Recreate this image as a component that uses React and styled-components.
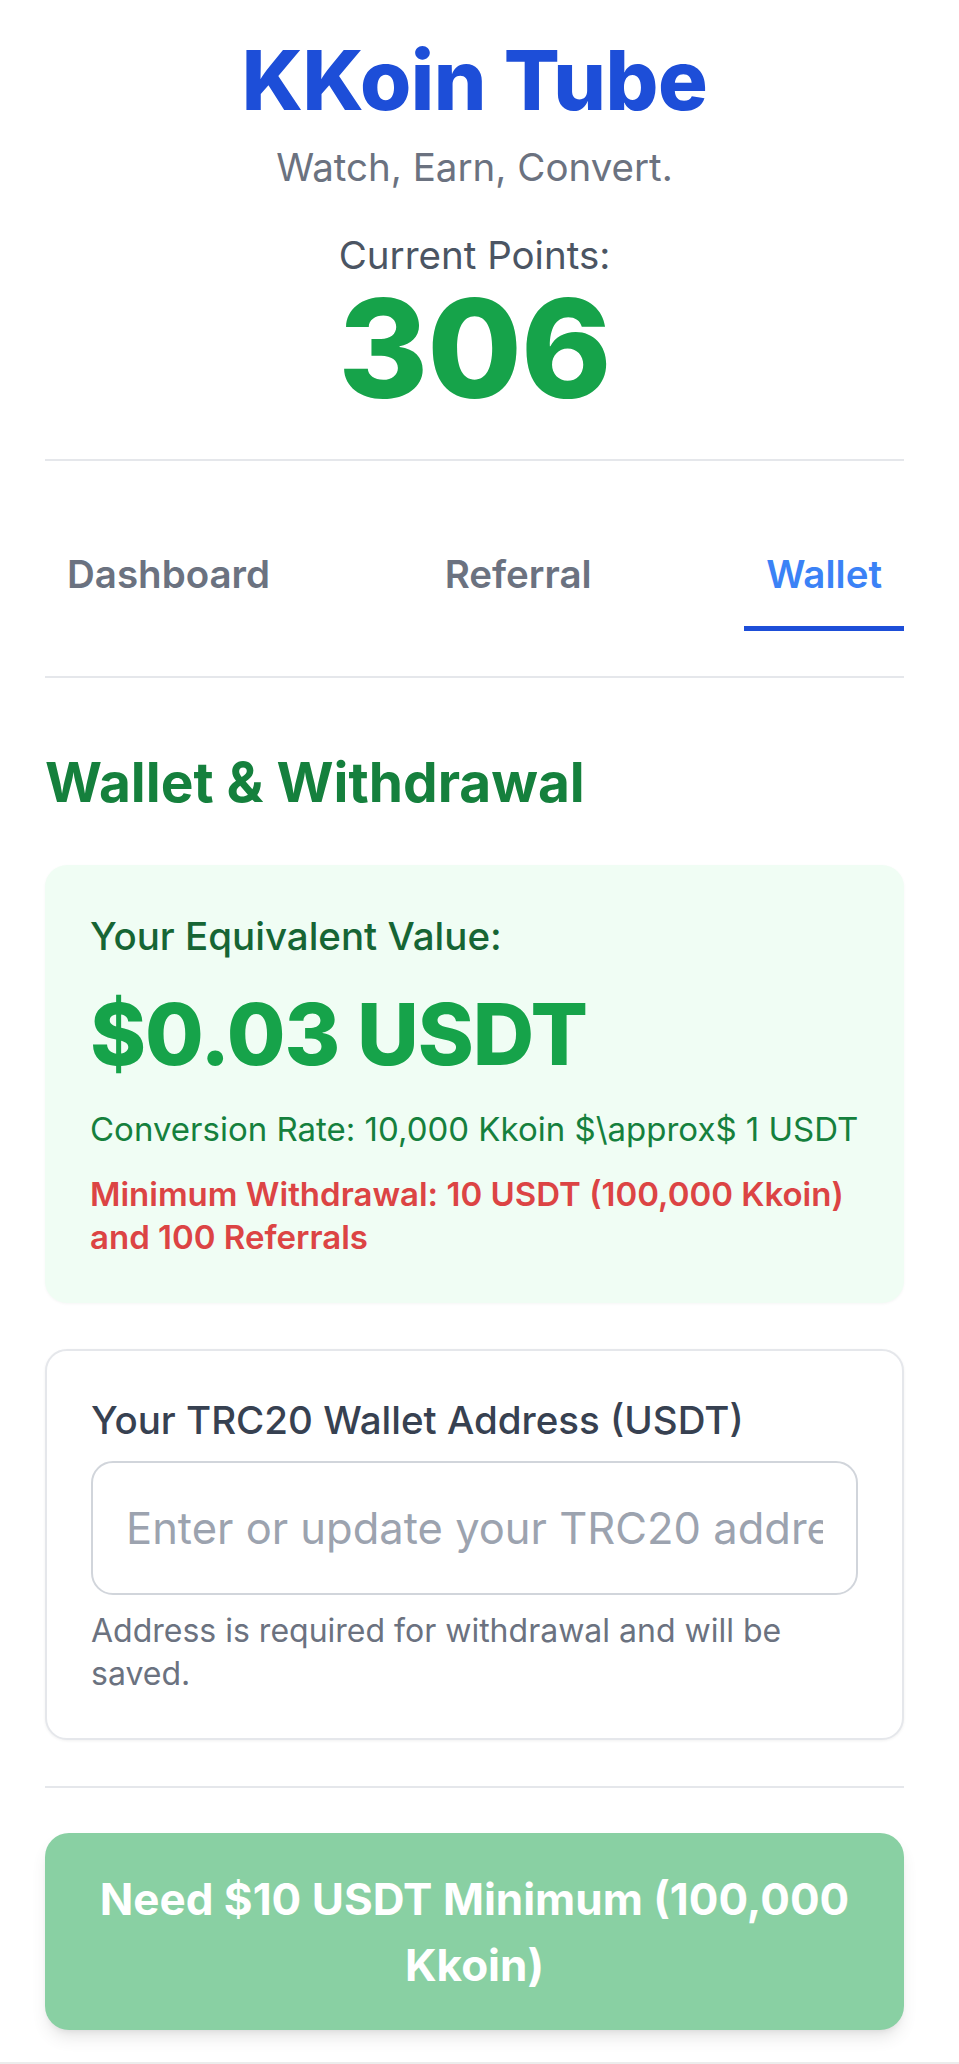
import React from "react";
import styled, { createGlobalStyle } from "styled-components";

const Global = createGlobalStyle`
  html, body { margin: 0; padding: 0; background: #ffffff; }
  body { font-family: Inter, "Noto Sans", "Liberation Sans", sans-serif; -webkit-font-smoothing: antialiased; }
  * { box-sizing: border-box; }
`;

const Page = styled.div`
  width: 959px;
  min-height: 2064px;
  padding: 34px 55px 30px 45px;
  display: flex;
  flex-direction: column;
`;

const Header = styled.header`
  display: flex;
  flex-direction: column;
  align-items: center;
  text-align: center;
`;

const Title = styled.h1`
  margin: 0;
  font-size: 83px;
  line-height: 92px;
  font-weight: 800;
  color: #1d4ed8;
  letter-spacing: -0.5px;
`;

const Subtitle = styled.p`
  margin: 14px 0 0;
  font-size: 38.5px;
  line-height: 54px;
  color: #6b7280;
`;

const PointsLabel = styled.p`
  margin: 35px 0 0;
  font-size: 38.5px;
  line-height: 52px;
  color: #4b5563;
`;

const Points = styled.div`
  font-size: 137px;
  line-height: 135px;
  font-weight: 800;
  color: #16a34a;
  letter-spacing: -1px;
`;

const Divider = styled.hr`
  border: none;
  border-top: 2px solid #e5e7eb;
  margin: ${(p) => p.$mt || 0}px 0 0;
  width: 100%;
`;

const Tabs = styled.nav`
  display: flex;
  justify-content: space-between;
  margin-top: 62px;
  padding-bottom: 45px;
  border-bottom: 2px solid #e5e7eb;
`;

const Tab = styled.button`
  appearance: none;
  background: none;
  border: none;
  border-bottom: 5px solid ${(p) => (p.$active ? "#1d4ed8" : "transparent")};
  padding: 24px 22px 24px;
  font-family: inherit;
  font-size: 38.5px;
  line-height: 55px;
  font-weight: 600;
  color: ${(p) => (p.$active ? "#3b82f6" : "#6b7280")};
  cursor: pointer;
`;

const SectionTitle = styled.h2`
  margin: 67px 0 0;
  font-size: 55px;
  line-height: 74px;
  font-weight: 700;
  color: #15803d;
`;

const ValueCard = styled.section`
  margin-top: 46px;
  background: #f0fdf4;
  border-radius: 22px;
  padding: 44px 45px 44px;
  box-shadow: 0 1px 3px rgba(0, 0, 0, 0.04);
  display: flex;
  flex-direction: column;
`;

const ValueLabel = styled.p`
  margin: 0;
  font-size: 38.5px;
  line-height: 54px;
  font-weight: 500;
  color: #166534;
`;

const ValueAmount = styled.div`
  margin-top: 28px;
  font-size: 85px;
  line-height: 88px;
  font-weight: 800;
  color: #16a34a;
  letter-spacing: -1px;
`;

const RateText = styled.p`
  margin: 27px 0 0;
  font-size: 33px;
  line-height: 46px;
  color: #15803d;
`;

const WarnText = styled.p`
  margin: 21px 0 0;
  font-size: 33px;
  line-height: 43px;
  font-weight: 600;
  color: #dc4444;
`;

const FormCard = styled.section`
  margin-top: 46px;
  background: #ffffff;
  border: 2px solid #e5e7eb;
  border-radius: 22px;
  padding: 42px 44px 43px 44px;
  box-shadow: 0 1px 3px rgba(0, 0, 0, 0.06);
  display: flex;
  flex-direction: column;
`;

const FieldLabel = styled.label`
  font-size: 38.5px;
  line-height: 54px;
  font-weight: 500;
  color: #374151;
`;

const Input = styled.input`
  margin-top: 14px;
  width: 100%;
  height: 134px;
  border: 2px solid #d1d5db;
  border-radius: 22px;
  padding: 0 33px;
  font-family: inherit;
  font-size: 43.5px;
  color: #111827;
  background: #fff;
  outline: none;
  &::placeholder { color: #9ca3af; }
`;

const HelpText = styled.p`
  margin: 14px 0 0;
  font-size: 32px;
  line-height: 43px;
  color: #6b7280;
`;

const SubmitButton = styled.button`
  margin-top: 45px;
  width: 100%;
  border: none;
  border-radius: 24px;
  padding: 33px 45px 32px;
  background: #16a34a;
  opacity: 0.5;
  color: #ffffff;
  font-family: inherit;
  font-size: 44px;
  line-height: 66px;
  font-weight: 700;
  box-shadow: 0 10px 15px -3px rgba(0, 0, 0, 0.2), 0 4px 6px -4px rgba(0, 0, 0, 0.2);
  cursor: not-allowed;
`;

const BottomEdge = styled.div`
  position: fixed;
  left: 0;
  right: 0;
  bottom: 0;
  height: 2px;
  background: #ececec;
`;

export default function App() {
  return (
    <>
      <Global />
      <Page>
        <Header>
          <Title>KKoin Tube</Title>
          <Subtitle>Watch, Earn, Convert.</Subtitle>
          <PointsLabel>Current Points:</PointsLabel>
          <Points>306</Points>
        </Header>
        <Divider $mt={43} />
        <Tabs>
          <Tab>Dashboard</Tab>
          <Tab>Referral</Tab>
          <Tab $active>Wallet</Tab>
        </Tabs>
        <SectionTitle>Wallet &amp; Withdrawal</SectionTitle>
        <ValueCard>
          <ValueLabel>Your Equivalent Value:</ValueLabel>
          <ValueAmount>$0.03 USDT</ValueAmount>
          <RateText>Conversion Rate: 10,000 Kkoin $\approx$ 1 USDT</RateText>
          <WarnText>Minimum Withdrawal: 10 USDT (100,000 Kkoin) and 100 Referrals</WarnText>
        </ValueCard>
        <FormCard>
          <FieldLabel htmlFor="trc20">Your TRC20 Wallet Address (USDT)</FieldLabel>
          <Input id="trc20" type="text" placeholder="Enter or update your TRC20 address" />
          <HelpText>Address is required for withdrawal and will be saved.</HelpText>
        </FormCard>
        <Divider $mt={46} />
        <SubmitButton disabled>Need $10 USDT Minimum (100,000 Kkoin)</SubmitButton>
      </Page>
      <BottomEdge />
    </>
  );
}
